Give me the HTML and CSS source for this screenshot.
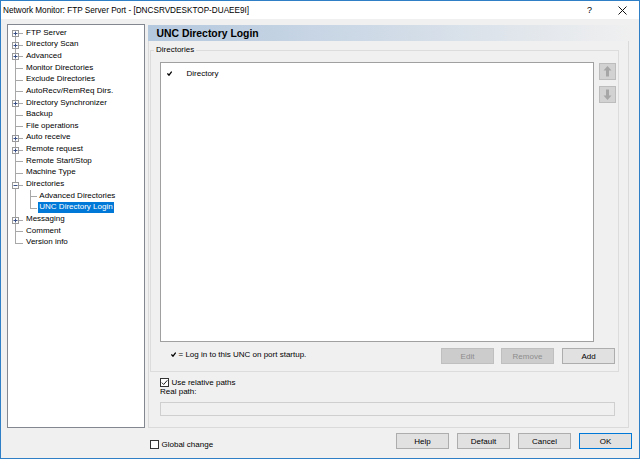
FILE: index.html
```html
<!DOCTYPE html>
<html>
<head>
<meta charset="utf-8">
<title>Network Monitor: FTP Server Port</title>
<link rel="stylesheet" href="styles.css">
</head>
<body>
<div class="window">
  <div class="titlebar">
    <span class="title">Network Monitor: FTP Server Port - [DNCSRVDESKTOP-DUAEE9I]</span>
    <span class="help-q">?</span>
    <svg class="close-x" width="9" height="9" viewBox="0 0 9 9"><path d="M0.5 0.5L8.5 8.5M8.5 0.5L0.5 8.5" stroke="#111" stroke-width="1"/></svg>
  </div>
  <div class="client">
    <div class="main">
      <div class="tree-panel">
        <ul class="tree">
          <li><svg class="exp" viewBox="0 0 7 7"><rect x="0.5" y="0.5" width="6" height="6" fill="#fff" stroke="#9a9a9a"/><path d="M1.5 3.5h4M3.5 1.5v4" stroke="#3a4f83"/></svg><span class="label">FTP Server</span></li>
          <li><svg class="exp" viewBox="0 0 7 7"><rect x="0.5" y="0.5" width="6" height="6" fill="#fff" stroke="#9a9a9a"/><path d="M1.5 3.5h4M3.5 1.5v4" stroke="#3a4f83"/></svg><span class="label">Directory Scan</span></li>
          <li><svg class="exp" viewBox="0 0 7 7"><rect x="0.5" y="0.5" width="6" height="6" fill="#fff" stroke="#9a9a9a"/><path d="M1.5 3.5h4M3.5 1.5v4" stroke="#3a4f83"/></svg><span class="label">Advanced</span></li>
          <li><span class="label">Monitor Directories</span></li>
          <li><span class="label">Exclude Directories</span></li>
          <li><span class="label">AutoRecv/RemReq Dirs.</span></li>
          <li><svg class="exp" viewBox="0 0 7 7"><rect x="0.5" y="0.5" width="6" height="6" fill="#fff" stroke="#9a9a9a"/><path d="M1.5 3.5h4M3.5 1.5v4" stroke="#3a4f83"/></svg><span class="label">Directory Synchronizer</span></li>
          <li><span class="label">Backup</span></li>
          <li><span class="label">File operations</span></li>
          <li><svg class="exp" viewBox="0 0 7 7"><rect x="0.5" y="0.5" width="6" height="6" fill="#fff" stroke="#9a9a9a"/><path d="M1.5 3.5h4M3.5 1.5v4" stroke="#3a4f83"/></svg><span class="label">Auto receive</span></li>
          <li><svg class="exp" viewBox="0 0 7 7"><rect x="0.5" y="0.5" width="6" height="6" fill="#fff" stroke="#9a9a9a"/><path d="M1.5 3.5h4M3.5 1.5v4" stroke="#3a4f83"/></svg><span class="label">Remote request</span></li>
          <li><span class="label">Remote Start/Stop</span></li>
          <li><span class="label">Machine Type</span></li>
          <li><svg class="exp" viewBox="0 0 7 7"><rect x="0.5" y="0.5" width="6" height="6" fill="#fff" stroke="#9a9a9a"/><path d="M1.5 3.5h4" stroke="#3a4f83"/></svg><span class="label">Directories</span></li>
          <li class="child"><span class="label">Advanced Directories</span></li>
          <li class="child last"><span class="label sel">UNC Directory Login</span></li>
          <li><svg class="exp" viewBox="0 0 7 7"><rect x="0.5" y="0.5" width="6" height="6" fill="#fff" stroke="#9a9a9a"/><path d="M1.5 3.5h4M3.5 1.5v4" stroke="#3a4f83"/></svg><span class="label">Messaging</span></li>
          <li><span class="label">Comment</span></li>
          <li><span class="label">Version info</span></li>
        </ul>
      </div>
      <div class="right-col">
        <div class="page-header">UNC Directory Login</div>
        <div class="pane">
          <fieldset class="group">
            <legend>Directories</legend>
            <div class="group-body">
              <div class="list-row">
                <div class="listbox">
                  <div class="list-item">
                    <svg class="tick" width="5" height="5" viewBox="0 0 5 5"><path d="M0.4 2.4L2 4.2L4.7 0.6" fill="none" stroke="#000" stroke-width="1.3"/></svg>
                    <span class="item-text">Directory</span>
                  </div>
                </div>
                <div class="arrows">
                  <button class="arrow-btn up" disabled><svg width="15" height="15" viewBox="0 0 15 15"><path d="M7.5 2L11.5 6.5H9V12.5H6V6.5H3.5Z" fill="#a6a6a6"/></svg></button>
                  <button class="arrow-btn down" disabled><svg width="15" height="15" viewBox="0 0 15 15"><path d="M7.5 13L11.5 8.5H9V2.5H6V8.5H3.5Z" fill="#a6a6a6"/></svg></button>
                </div>
              </div>
              <div class="action-row">
                <div class="legend-note">
                  <svg class="tick" width="5" height="5" viewBox="0 0 5 5"><path d="M0.4 2.4L2 4.2L4.7 0.6" fill="none" stroke="#000" stroke-width="1.3"/></svg>
                  <span>= Log in to this UNC on port startup.</span>
                </div>
                <div class="actions">
                  <button class="btn disabled" disabled>Edit</button>
                  <button class="btn disabled" disabled>Remove</button>
                  <button class="btn">Add</button>
                </div>
              </div>
            </div>
          </fieldset>
          <div class="options">
            <label class="check-row">
              <span class="cb checked"><svg width="7" height="7" viewBox="0 0 7 7"><path d="M0.8 3.6L2.7 5.5L6.3 1.3" fill="none" stroke="#222" stroke-width="1"/></svg></span>
              <span>Use relative paths</span>
            </label>
            <div class="field-label">Real path:</div>
            <div class="input disabled-input"></div>
          </div>
        </div>
      </div>
    </div>
    <div class="bottom-bar">
      <label class="check-row global">
        <span class="cb"></span>
        <span>Global change</span>
      </label>
      <div class="footer-buttons">
        <button class="btn">Help</button>
        <button class="btn">Default</button>
        <button class="btn">Cancel</button>
        <button class="btn default-btn">OK</button>
      </div>
    </div>
  </div>
</div>
</body>
</html>
```

FILE: styles.css
```css
* { box-sizing: border-box; }
html, body { margin: 0; padding: 0; }
body {
  width: 640px;
  height: 459px;
  overflow: hidden;
  font-family: "Liberation Sans", Arial, sans-serif;
  font-size: 8px;
  color: #000;
  background: #f0f0f0;
}
.window {
  width: 640px;
  height: 459px;
  border: 1px solid #2f7fc6;
  display: flex;
  flex-direction: column;
  background: #f0f0f0;
}
.titlebar {
  height: 18px;
  flex: none;
  background: #fff;
  display: flex;
  align-items: center;
  padding-left: 2px;
}
.title { flex: 1; font-size: 8.2px; white-space: nowrap; }
.help-q { font-size: 9px; margin-right: 26px; }
.close-x { margin-right: 12px; display: block; }

.client {
  flex: 1;
  display: flex;
  flex-direction: column;
  padding: 5px 0 0 6px;
}
.main { display: flex; height: 404px; flex: none; }

/* tree */
.tree-panel {
  width: 138px;
  background: #fff;
  border: 1px solid #828790;
}
.tree {
  list-style: none;
  margin: 0;
  padding: 2px 0 0 0;
  position: relative;
}
.tree::before {
  content: "";
  position: absolute;
  left: 7px;
  top: 8px;
  width: 1px;
  height: 210px;
  background: #a8a8a8;
}
.tree li {
  position: relative;
  height: 11.67px;
  display: flex;
  align-items: center;
  padding-left: 16.5px;
  white-space: nowrap;
}
.tree li::before {
  content: "";
  position: absolute;
  left: 7px;
  top: 6px;
  width: 8px;
  height: 1px;
  background: #a8a8a8;
}
.tree li.child { padding-left: 29.8px; }
.tree li.child::before { left: 22px; width: 7px; }
.tree li.child::after {
  content: "";
  position: absolute;
  left: 22px;
  top: 0;
  width: 1px;
  height: 100%;
  background: #a8a8a8;
}
.tree li.child.last::after { height: 6.5px; }
.exp {
  position: absolute;
  left: 4px;
  top: 3px;
  width: 7px;
  height: 7px;
  z-index: 1;
}
.label {
  padding: 0 1.5px;
  line-height: 10.5px;
}
.label.sel { background: #0078d7; color: #fff; }

/* right column */
.right-col {
  margin-left: 3px;
  width: 487px;
  display: flex;
  flex-direction: column;
}
.page-header {
  flex: none;
  height: 16px;
  margin-top: 1px;
  padding-left: 8.5px;
  display: flex;
  align-items: center;
  font-weight: bold;
  font-size: 10.4px;
  background: linear-gradient(to right, #b4c8de, #d3dde8 55%, #f0f0f0);
}
.pane {
  flex: 1;
  margin-right: 6px;
  border: 1px solid #dadada;
  border-top: none;
}
.group {
  margin: 4px 0 0 1px;
  width: 469px;
  padding: 0;
  border: 1px solid #dcdcdc;
  min-width: 0;
}
.group legend {
  margin-left: 3px;
  padding: 0 2px;
  line-height: 10px;
  font-size: 8px;
}
.group-body { padding: 7px 2px 7px 9px; }
.list-row { display: flex; gap: 5px; }
.listbox {
  width: 434px;
  height: 280px;
  background: #fff;
  border: 1px solid #a0a0a0;
  padding-top: 5px;
}
.list-item {
  display: flex;
  align-items: center;
  height: 10px;
  padding-left: 6px;
}
.tick { display: block; flex: none; }
.item-text { margin-left: 14.5px; }
.arrows { display: flex; flex-direction: column; width: 17px; }
.arrow-btn {
  width: 17px;
  height: 17px;
  padding: 0;
  margin: 1px 0 0 0;
  background: #d2d2d2;
  border: 1px solid #bcbcbc;
  display: flex;
  align-items: center;
  justify-content: center;
}
.arrow-btn.down { margin-top: 6px; }
.arrow-btn svg { display: block; }

.action-row {
  display: flex;
  align-items: center;
  margin-top: 6px;
  height: 16px;
}
.legend-note {
  display: flex;
  align-items: center;
  padding-left: 10.5px;
  margin-bottom: 3px;
  gap: 3px;
}
.actions { margin-left: auto; display: flex; margin-right: 1px; }
.actions .btn + .btn { margin-left: 7px; }
.actions .btn:last-child { margin-left: 8px; }

.btn {
  width: 53px;
  height: 16px;
  padding: 0;
  font-family: "Liberation Sans", Arial, sans-serif;
  font-size: 8px;
  color: #000;
  background: #e1e1e1;
  border: 1px solid #adadad;
}
.btn.disabled {
  background: #cccccc;
  border-color: #bfbfbf;
  color: #8c8c8c;
}
.btn.default-btn { border-color: #0078d7; }

.options { padding: 5px 0 0 11px; }
.check-row {
  display: flex;
  align-items: center;
  height: 10px;
  gap: 2.5px;
}
.cb {
  width: 9px;
  height: 9px;
  border: 1px solid #333;
  background: #fff;
  display: flex;
  align-items: center;
  justify-content: center;
  flex: none;
}
.cb svg { display: block; }
.field-label { line-height: 10px; height: 10px; }
.input {
  margin-top: 5px;
  width: 455px;
  height: 14px;
  border: 1px solid #cfcfcf;
  background: #f0f0f0;
}

.bottom-bar {
  flex: 1;
  display: flex;
  align-items: flex-start;
  padding: 5px 7px 0 143px;
}
.global { margin-top: 6.5px; }
.footer-buttons { margin-left: auto; display: flex; gap: 8px; }
```
